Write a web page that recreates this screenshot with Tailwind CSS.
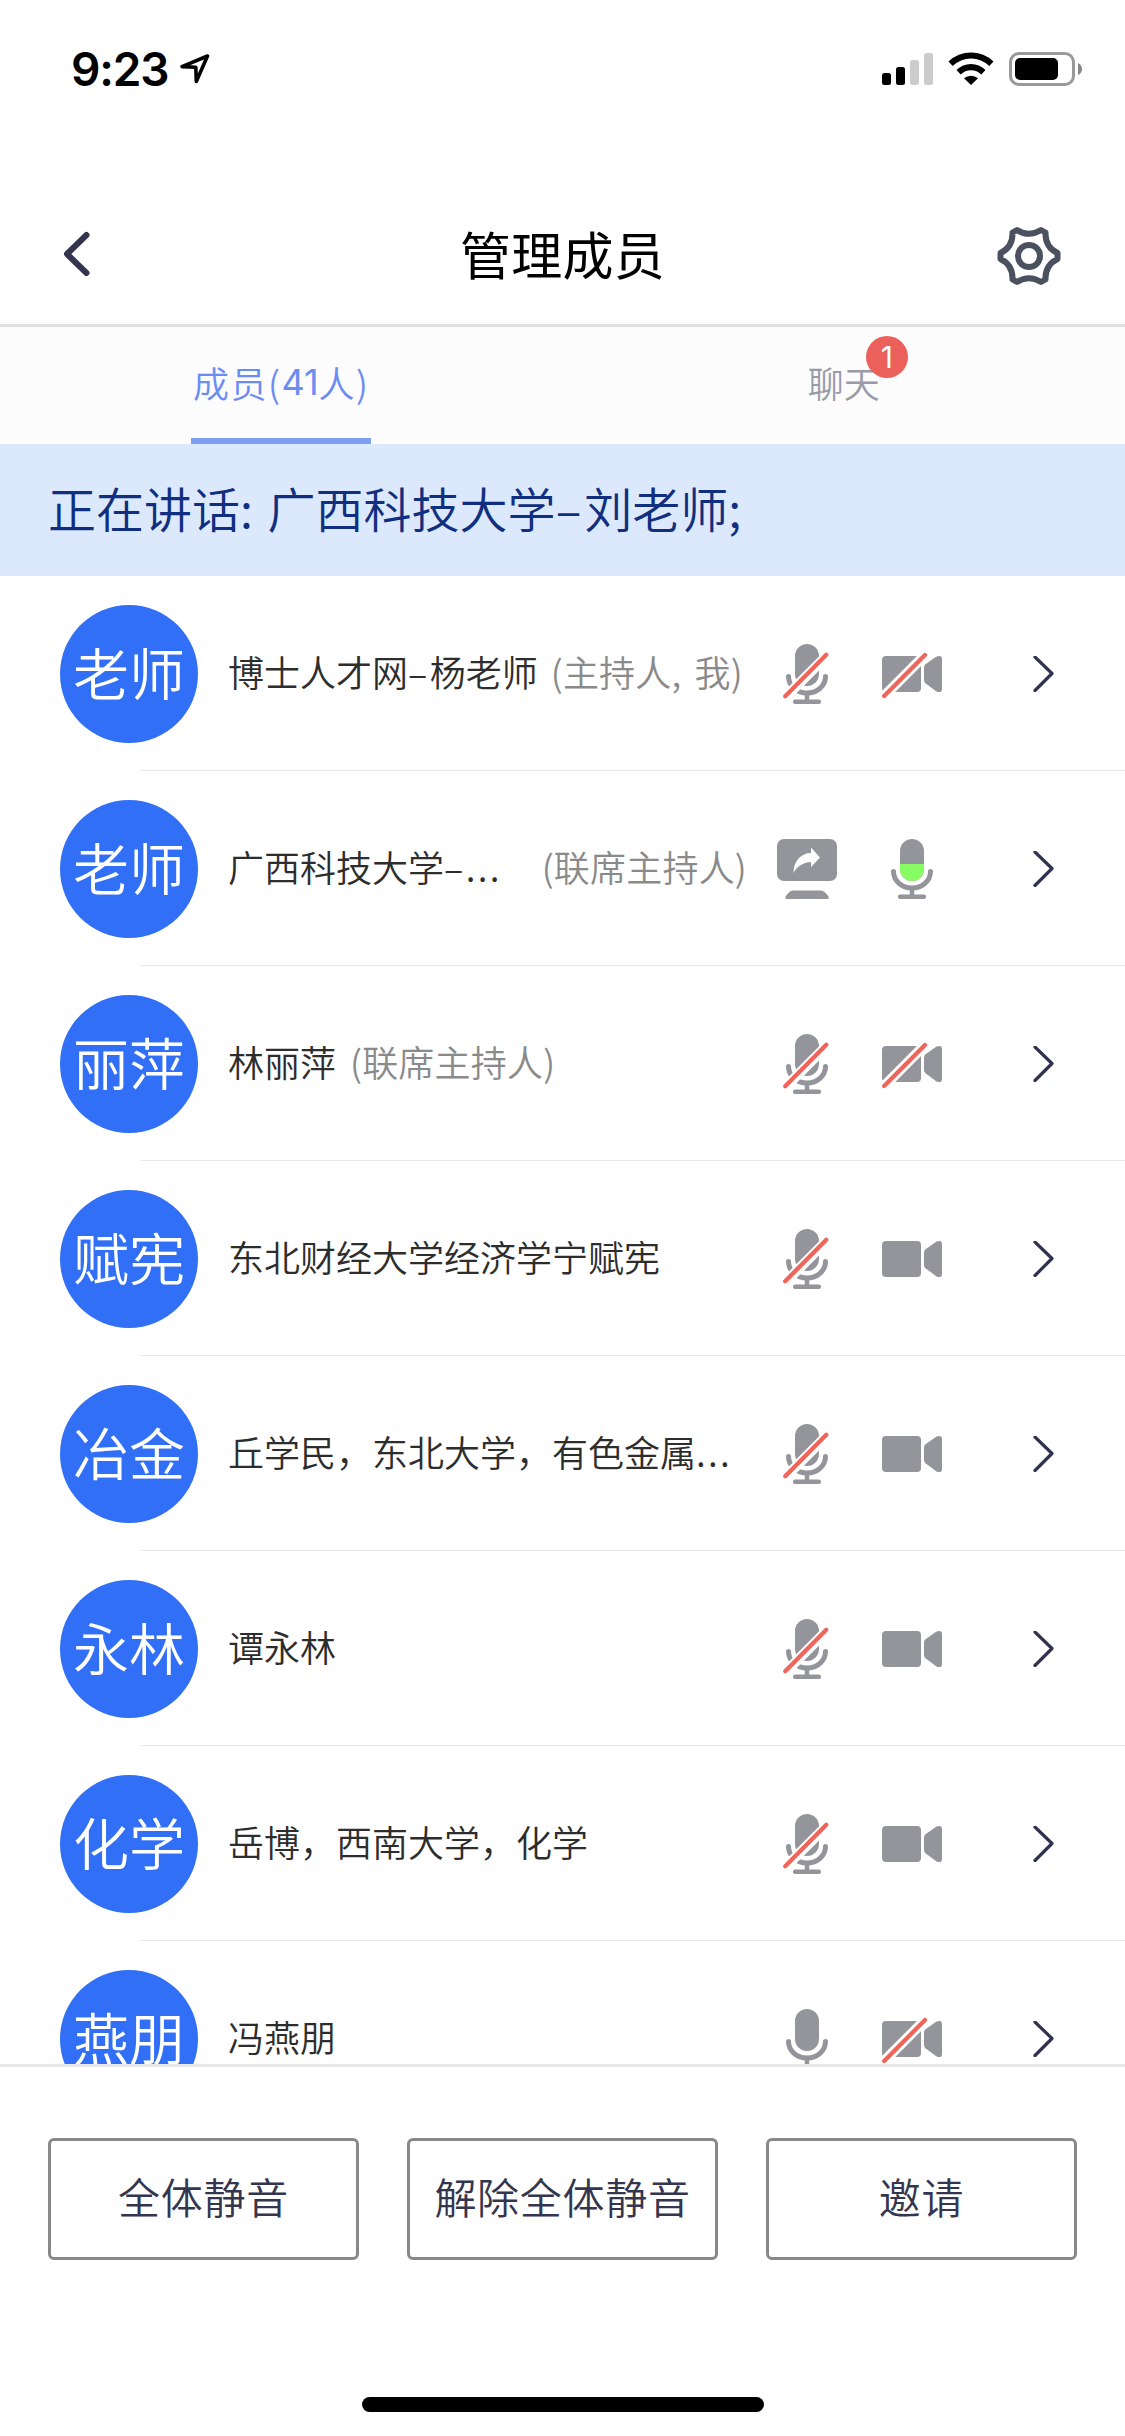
<!DOCTYPE html>
<html lang="zh-CN">
<head>
<meta charset="utf-8">
<title>管理成员</title>
<script src="https://cdn.jsdelivr.net/npm/@tailwindcss/browser@4"></script>
</head>
<body class="bg-white">
<svg width="0" height="0" class="absolute">
  <defs>
    <symbol id="mic" viewBox="0 0 60 60">
      <rect x="18" y="0" width="24" height="42" rx="12" fill="#94959b"/>
      <path d="M11.500 32.500C11.500 42 20 49 30 49S48.500 42 48.500 32.500" fill="none" stroke="#94959b" stroke-width="5" stroke-linecap="round"/>
      <path d="M30 49V57" stroke="#94959b" stroke-width="4.500"/>
      <rect x="16" y="55.500" width="28" height="4.500" rx="2" fill="#94959b"/>
    </symbol>
    <symbol id="mic-off" viewBox="0 0 60 60">
      <use href="#mic" width="60" height="60"/>
      <path d="M5 56.500L53 8.500" stroke="#fff" stroke-width="10"/>
      <path d="M8.200 52.200L49.300 10.800" stroke="#f0655a" stroke-width="4.300" stroke-linecap="round"/>
    </symbol>
    <symbol id="cam" viewBox="0 0 60 60">
      <rect x="0" y="12" width="39" height="36" rx="4" fill="#94959b"/>
      <path d="M42 23.500Q42 21.500 43.500 20.300L54.500 12.500Q60 10.500 60 15V45Q60 49.500 54.500 47.500L43.500 39.200Q42 38 42 36Z" fill="#94959b"/>
    </symbol>
    <symbol id="cam-off" viewBox="0 0 60 60">
      <use href="#cam" width="60" height="60"/>
      <path d="M-3 57.200L45 9" stroke="#fff" stroke-width="10"/>
      <path d="M2.200 52L43 11" stroke="#f0655a" stroke-width="4.300" stroke-linecap="round"/>
    </symbol>
    <symbol id="mic-live" viewBox="0 0 60 60">
      <use href="#mic" width="60" height="60"/>
      <path d="M18 25H42V30A12 12 0 0 1 18 30Z" fill="#88fd63"/>
    </symbol>
    <symbol id="share" viewBox="0 0 60 60">
      <rect width="60" height="42" rx="7" fill="#94959b"/>
      <path d="M16.500 34C16.500 22 24 14 34 14V8.500L43 18.500L34 28V23C27 23 20 27 16.500 34Z" fill="#fff"/>
      <path d="M16 51.500H44Q46 51.500 47.500 53L50.500 56Q53.500 60 50 60H10Q7 60 9.500 56L12.500 53Q14 51.500 16 51.500Z" fill="#94959b"/>
    </symbol>
    <symbol id="chev" viewBox="0 0 21 36">
      <path d="M2 1L19 17.500L2 34.500" fill="none" stroke="#30324f" stroke-width="3.200" stroke-linecap="round" stroke-linejoin="round"/>
    </symbol>
  </defs>
</svg>

<div class="flex h-[2436px] w-[1125px] flex-col overflow-hidden bg-white font-['Noto_Sans_CJK_SC',sans-serif] font-[350]">
  <!-- status bar -->
  <div class="flex h-[180px] shrink-0 items-start pt-[50px] pr-[42px] pl-[71px]">
    <div class="mt-[-4px] h-[46px] w-[107px] font-['Inter',sans-serif] text-[46px] leading-[46px] font-semibold tracking-[-1.200px] whitespace-nowrap text-black">9:23</div>
    <svg class="mt-[2px] h-[34px] w-[34px]" viewBox="0 0 34 34"><path d="M4 14.600L29.500 4L18.300 29.500L17.800 15.200Z" fill="none" stroke="#000" stroke-width="3.600" stroke-linejoin="round"/></svg>
    <svg class="ml-auto h-[36px] w-[201px]" viewBox="0 0 201 36">
      <rect x="0" y="23" width="9" height="12" rx="2.500"/>
      <rect x="14" y="17" width="9" height="18" rx="2.500"/>
      <rect x="28" y="10" width="9" height="25" rx="2.500" fill="#ccc"/>
      <rect x="42" y="3" width="9" height="32" rx="2.500" fill="#ccc"/>
      <path d="M66.500 11.500A32.500 32.500 0 0 1 111.500 11.500L107.300 16A26 26 0 0 0 70.700 16Z"/>
      <path d="M74.500 20A20.500 20.500 0 0 1 103.500 20L99.300 24.500A14.500 14.500 0 0 0 78.700 24.500Z"/>
      <path d="M82 28.300A10.500 10.500 0 0 1 96 28.300L89 35Z"/>
      <rect x="128.500" y="3.500" width="63" height="31" rx="8.500" fill="none" stroke="#999" stroke-width="3"/>
      <rect x="133" y="8" width="43" height="22" rx="5"/>
      <path d="M196 13Q200 15 200 19T196 25Z" fill="#888"/>
    </svg>
  </div>
  <!-- navigation bar -->
  <div class="flex h-[147px] shrink-0 items-start justify-between border-b-[3px] border-[#e0e0e0] px-[62px]">
    <svg class="mt-[51px] h-[46px] w-[68px]" viewBox="0 0 68 46"><path d="M24.500 4L5 23L24.500 42" fill="none" stroke="#34344f" stroke-width="6" stroke-linecap="round" stroke-linejoin="round"/></svg>
    <h1 class="mt-[43px] text-[51px] leading-[60px] font-normal tracking-[0.300px] text-black">管理成员</h1>
    <svg class="mt-[42px] h-[68px] w-[68px]" viewBox="-34 -34 68 68" fill="none" stroke="#4c515f" stroke-width="6" stroke-linejoin="round">
      <circle r="11"/>
      <path d="M-12 -26Q0 -18.500 12 -26L16.500 -23.500Q16 -9 28.500 -3V3Q16 9 16.500 23.500L12 26Q0 18.500 -12 26L-16.500 23.500Q-16 9 -28.500 3V-3Q-16 -9 -16.500 -23.500Z"/>
    </svg>
  </div>
  <!-- tabs -->
  <div class="grid h-[117px] shrink-0 grid-cols-2 bg-[#fcfcfc] text-[36px] leading-[54px]">
    <div class="flex justify-center">
      <div class="flex w-[180px] justify-center border-b-[6px] border-[#7d9ff2] pt-[28px] tracking-[1.500px] whitespace-nowrap text-[#6b8df2]">成员(<span class="font-['Inter',sans-serif] font-normal tracking-[0px]">41</span>人)</div>
    </div>
    <div class="flex justify-center pt-[28px] text-[#9a9ba9]">
      <div class="relative h-[54px]">聊天<span class="absolute top-[-19px] left-[58px] flex h-[42px] w-[42px] items-center justify-center rounded-full bg-[#eb605b] font-['Inter',sans-serif] text-[30px] font-normal text-white">1</span></div>
    </div>
  </div>
  <!-- speaking banner -->
  <div class="flex h-[132px] shrink-0 items-center bg-[#dce8fb] pb-[6px] pl-[48px] text-[48px] whitespace-pre text-[#102f80]"><span class="[word-spacing:4px]">正在讲话: 广西科技大学<span class="tracking-[3px]">–</span>刘老师;</span></div>
  <!-- member list -->
  <div id="list" class="h-[1488px] shrink-0 overflow-hidden"></div>
  <!-- actions -->
  <div class="flex h-[372px] shrink-0 flex-col items-center justify-between border-t-[3px] border-[#e8e8e8] pt-[71px] pb-[24px]">
    <div class="grid w-[1029px] grid-cols-3 gap-[48px] text-[42px] leading-[60px] tracking-[0.700px] text-[#34364f]">
      <button class="h-[122px] rounded-[6px] border-[3px] border-[#888] pb-[6px]">全体静音</button>
      <button class="h-[122px] rounded-[6px] border-[3px] border-[#888] pb-[6px]">解除全体静音</button>
      <button class="h-[122px] rounded-[6px] border-[3px] border-[#888] pb-[6px]">邀请</button>
    </div>
    <div class="h-[15px] w-[402px] rounded-full bg-black"></div>
  </div>
</div>
<script>
  const members = [
    ['老师', '博士人才网–杨老师', '(主持人, 我)', 'mic-off', 'cam-off', 'ml-[13px]'],
    ['老师', '广西科技大学–...', '(联席主持人)', 'share', 'mic-live', 'ml-[40px]'],
    ['丽萍', '林丽萍', '(联席主持人)', 'mic-off', 'cam-off', 'ml-[14px]'],
    ['赋宪', '东北财经大学经济学宁赋宪', '', 'mic-off', 'cam', ''],
    ['冶金', '丘学民，东北大学，有色金属...', '', 'mic-off', 'cam', ''],
    ['永林', '谭永林', '', 'mic-off', 'cam', ''],
    ['化学', '岳博，西南大学，化学', '', 'mic-off', 'cam', ''],
    ['燕朋', '冯燕朋', '', 'mic', 'cam-off', ''],
  ];
  const spaced = s => s
    .replace('...', '<span class="tracking-[2.300px]">...</span>')
    .replace('–', '<span class="tracking-[2.500px]">–</span>');
  document.getElementById('list').innerHTML = members.map(([av, name, role, a, b, gap]) => `
    <div class="flex h-[195px] pl-[60px]">
      <div class="mt-[29px] flex h-[138px] w-[138px] shrink-0 items-center justify-center rounded-full bg-[#306ff6] pb-[7px] text-[56px] leading-[60px] text-white">${av}</div>
      <div class="flex w-[549px] shrink-0 items-center pb-[5px] pl-[30px] text-[36px] whitespace-nowrap text-[#2d2d2d]"><span>${spaced(name)}</span><span class="text-[#8a8a8a] [word-spacing:5px] tracking-[0.200px] ${gap}">${role}</span></div>
      <div class="flex grow items-start pt-[68px] pl-[30px]">
        <svg class="h-[60px] w-[60px]"><use href="#${a}"/></svg>
        <svg class="ml-[45px] h-[60px] w-[60px]"><use href="#${b}"/></svg>
        <svg class="mt-[12px] ml-[91px] h-[36px] w-[21px]"><use href="#chev"/></svg>
      </div>
    </div>
    <div class="mt-[-1px] ml-[141px] h-px bg-[#e8e8e8]"></div>`).join('');
</script>
</body>
</html>
